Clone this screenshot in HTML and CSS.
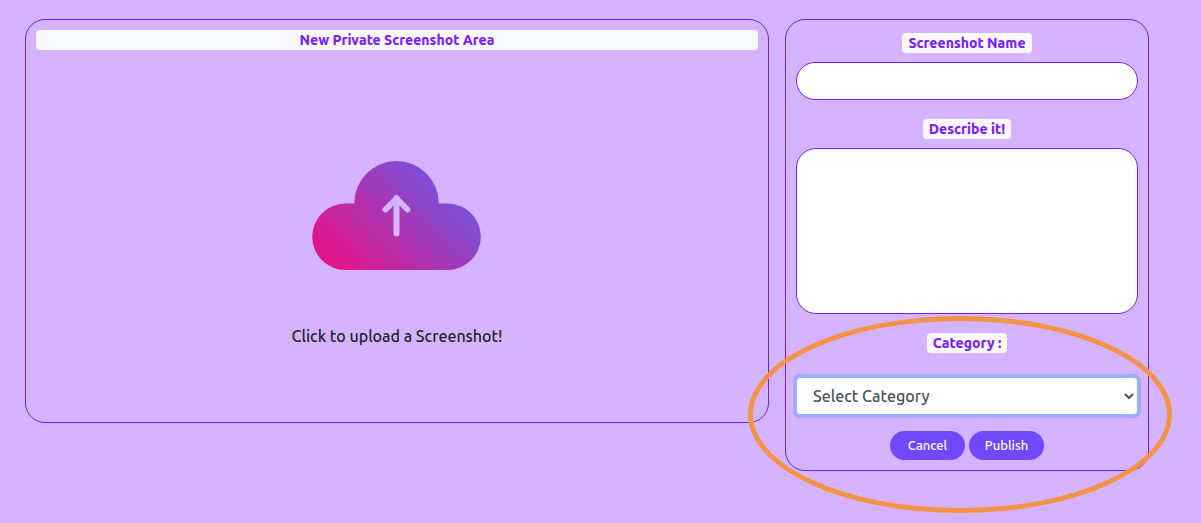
FILE: index.html
```html
<!DOCTYPE html>
<html lang="en">
<head>
<meta charset="utf-8">
<meta name="viewport" content="width=device-width, initial-scale=1">
<title>New Private Screenshot</title>
<link rel="stylesheet" href="styles.css">
</head>
<body>
<main class="layout">
  <section class="panel upload">
    <h1 class="badge upload-title">New Private Screenshot Area</h1>
    <button class="dropzone" type="button">
      <svg class="cloud" viewBox="0 0 170 109" aria-hidden="true">
        <defs>
          <linearGradient id="cloud-fill" gradientUnits="userSpaceOnUse" x1="13" y1="88" x2="111" y2="-10">
            <stop offset="0" stop-color="#e2168b"/>
            <stop offset="1" stop-color="#7155de"/>
          </linearGradient>
        </defs>
        <path fill="url(#cloud-fill)" d="M33.500 109A33.300 33.300 0 0 1 33.500 42.400H42.200A42.300 42.300 0 0 1 126.800 42.400H135.500A33.300 33.300 0 0 1 135.500 109Z"/>
        <path class="cloud-arrow" d="M84.500 72.500V37M73.500 48.500L84.500 37.500L95.500 48.500"/>
      </svg>
      <span class="hint">Click to upload a Screenshot!</span>
    </button>
  </section>

  <form class="panel details">
    <label class="badge" for="name">Screenshot Name</label>
    <input class="field" id="name" type="text">
    <label class="badge" for="description">Describe it!</label>
    <textarea class="field description" id="description"></textarea>
    <label class="badge category-label" for="category">Category :</label>
    <select class="category" id="category">
      <option>Select Category</option>
    </select>
    <div class="actions">
      <button class="action" type="button">Cancel</button>
      <button class="action" type="button">Publish</button>
    </div>
    <span class="highlight" aria-hidden="true"></span>
  </form>
</main>
</body>
</html>
```
FILE: styles.css
```css
* {
  box-sizing: border-box;
}

body {
  margin: 0;
  background: #d6b3ff;
  color: #212529;
  font-family: Ubuntu, "Noto Sans", sans-serif;
  font-size: 16px;
  font-weight: 540;
  line-height: 24px;
}

button,
input,
textarea,
select {
  font: inherit;
}

.layout {
  display: grid;
  grid-template-columns: 744fr 364fr;
  align-items: start;
  gap: 16px;
  padding: 19px 52px 52px 25px;
}

.panel {
  display: flex;
  flex-direction: column;
  border: 1px solid #6921f5;
  border-radius: 20px;
}

.badge {
  margin: 0;
  padding: 3px 6px;
  border-radius: 4px;
  background: #f8f9fa;
  color: #7b1fff;
  font-size: 14px;
  font-weight: 800;
  line-height: 14px;
  text-align: center;
}

.upload {
  padding: 10px;
}

.dropzone {
  display: flex;
  flex-direction: column;
  align-items: center;
  gap: 54px;
  padding: 111px 0 64px;
  border: 0;
  background: none;
  color: inherit;
  cursor: pointer;
}

.cloud {
  width: 170px;
  height: 109px;
}

.cloud-arrow {
  fill: none;
  stroke: #d6b3ff;
  stroke-width: 6;
  stroke-linecap: round;
  stroke-linejoin: round;
}

.details {
  position: relative;
  align-items: center;
  padding: 13px 10px 10px;
}

.field {
  width: 100%;
  height: 38px;
  margin: 9px 0 19px;
  padding: 6px 12px;
  border: 1px solid #7b1fff;
  border-radius: 20px;
  background: #fff;
  color: #495057;
}

.description {
  height: 166px;
  resize: none;
}

.category-label {
  margin-bottom: 24px;
}

.category {
  width: 100%;
  height: 38px;
  padding: 6px 12px;
  border: 1px solid #80bdff;
  border-radius: 4px;
  outline: 0;
  background: #fff;
  box-shadow: 0 0 0 3px #aaa6ff;
  color: #495057;
}

.actions {
  display: flex;
  gap: 4px;
  margin-top: 16px;
}

.action {
  width: 75px;
  padding: 4px 0;
  border: 0;
  border-radius: 20px;
  background: #7048ff;
  color: #fff;
  font-size: 13px;
  line-height: 21px;
  cursor: pointer;
}

.highlight {
  position: absolute;
  top: 296px;
  right: -24px;
  bottom: -43px;
  left: -38px;
  border: 5px solid #f39444;
  border-radius: 50%;
  pointer-events: none;
}
```
